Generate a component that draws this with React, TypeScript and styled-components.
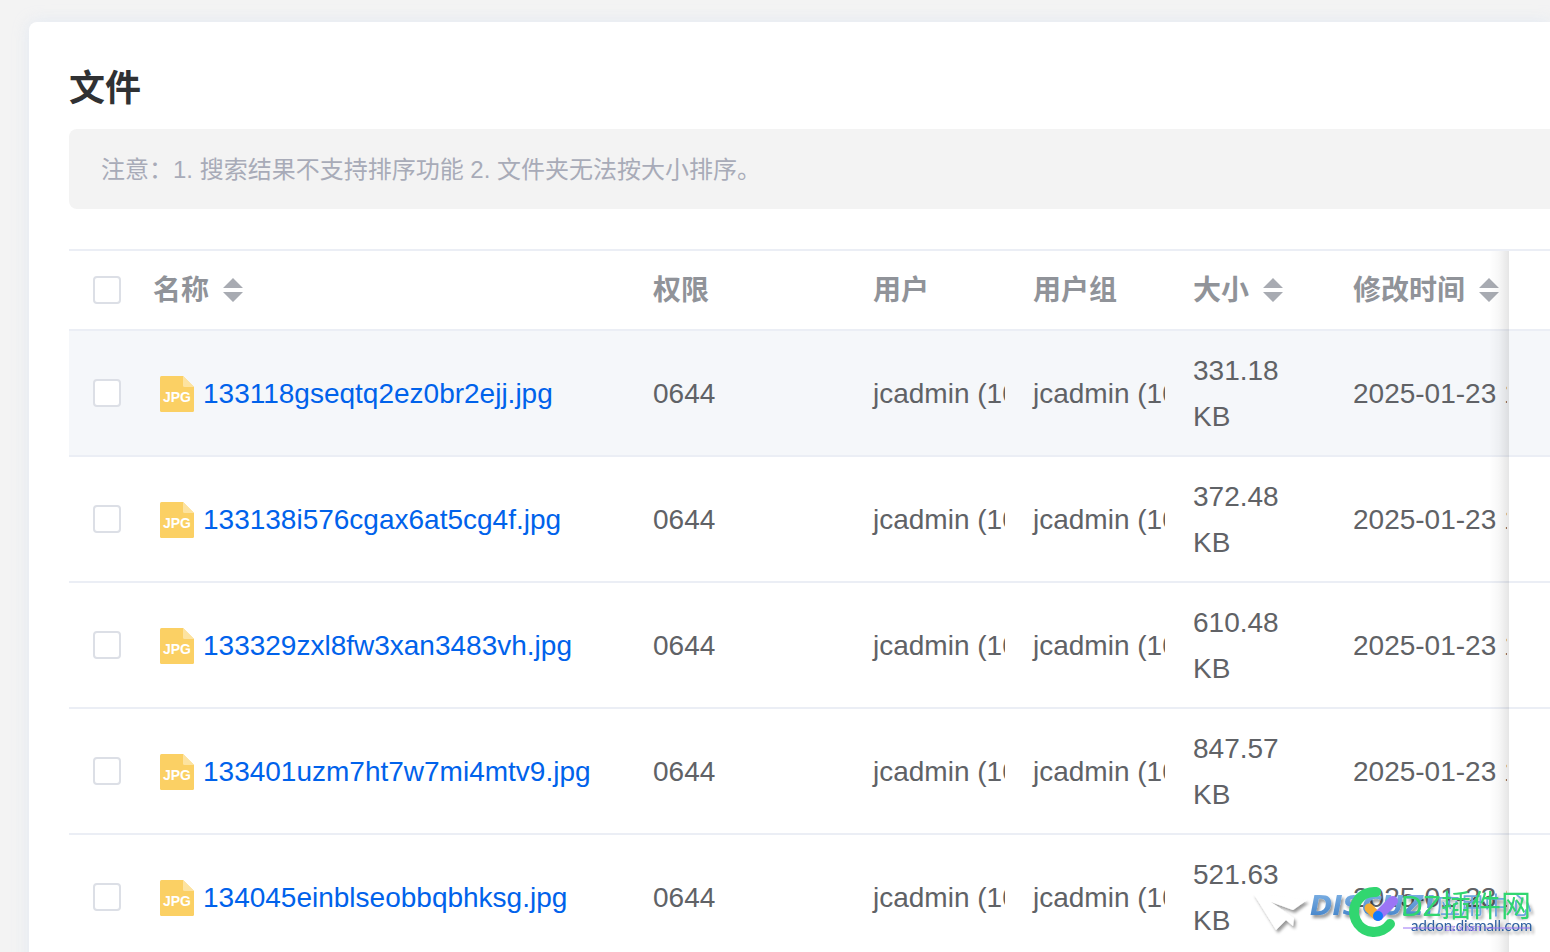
import React from 'react';
import styled, { createGlobalStyle } from 'styled-components';

const Global = createGlobalStyle`
  *, *::before, *::after { box-sizing: border-box; }
  body {
    margin: 0;
    background: #f3f3f3;
    font-family: "Liberation Sans", "Noto Sans CJK SC", sans-serif;
    font-size: 28px;
    color: #606266;
  }
`;

const Page = styled.div`
  display: flex;
  height: 100vh;
  padding: 22px 0 0 29px;
  overflow: hidden;
`;

const Card = styled.main`
  flex: 1;
  min-width: 0;
  height: max-content;
  padding: 40px 0 40px 40px;
  background: #fff;
  border-radius: 8px 0 0 8px;
  box-shadow: 0 0 16px rgba(220, 230, 244, 0.7);
`;

const Title = styled.h1`
  margin: 0 0 13px;
  font-size: 36px;
  line-height: 54px;
  font-weight: 700;
  color: #303133;
`;

const Notice = styled.p`
  margin: 0 0 40px;
  padding: 21px 32px 19px;
  background: #f3f3f3;
  border-radius: 8px 0 0 8px;
  font-size: 24px;
  line-height: 40px;
  color: #a8abb8;
`;

const Table = styled.table`
  width: 100%;
  table-layout: fixed;
  border-collapse: separate;
  border-spacing: 0;
  border-top: 2px solid #ebeef5;
`;

const Col = styled.col<{ $w?: number }>`
  width: ${({ $w }) => ($w ? `${$w}px` : 'auto')};
`;

const HeadCell = styled.th`
  height: 80px;
  padding: 0 0 0 20px;
  border-bottom: 2px solid #ebeef5;
  text-align: left;
  white-space: nowrap;
  font-weight: 700;
  line-height: 46px;
  color: #909399;
`;

const HeadLabel = styled.span`
  display: block;
  padding-top: 2px;
`;

const Row = styled.tr<{ $active?: boolean }>`
  background: ${({ $active }) => ($active ? '#f5f7fa' : '#fff')};
`;

const Cell = styled.td<{ $clip?: boolean; $end?: number }>`
  padding: 17px ${({ $end = 20 }) => $end}px 15px 20px;
  border-bottom: 2px solid #ebeef5;
  line-height: 46px;
  vertical-align: middle;
  white-space: ${({ $clip }) => ($clip ? 'nowrap' : 'normal')};
`;

const TickCell = styled(Cell)`
  padding: 16px 0 16px 20px;
`;

const Clip = styled.div`
  margin-left: -4px;
  padding-left: 4px;
  overflow: hidden;
`;

const pinned = `
  position: relative;
  padding: 0;
  &::before {
    content: '';
    position: absolute;
    top: 0;
    bottom: -2px;
    left: -20px;
    width: 20px;
    background: linear-gradient(to right, rgba(0, 0, 0, 0), rgba(0, 0, 0, 0.03) 50%, rgba(0, 0, 0, 0.1));
  }
`;
const PinnedHead = styled(HeadCell)`${pinned}`;
const PinnedCell = styled(Cell)`${pinned}`;

const Tick = styled.input`
  appearance: none;
  display: block;
  width: 28px;
  height: 28px;
  margin: 0 0 0 4px;
  background: #fff;
  border: 2px solid #dcdfe6;
  border-radius: 4px;
`;

const SortButton = styled.button`
  display: flex;
  align-items: center;
  gap: 14px;
  padding: 0;
  border: 0;
  background: none;
  font: inherit;
  color: inherit;
`;

const FileLink = styled.a`
  display: flex;
  align-items: center;
  gap: 9px;
  padding-left: 7px;
  color: #0062eb;
  text-decoration: none;
`;

const Watermark = styled.aside`
  position: fixed;
  right: 14px;
  bottom: 8px;
  pointer-events: none;
  svg { display: block; }
`;

const SortIcon = () => (
  <svg width="20" height="24" viewBox="0 0 20 24" fill="#a8abb2" aria-hidden="true">
    <path d="M10 0 20 10H0Z M0 14H20L10 24Z" />
  </svg>
);

const JpgIcon = () => (
  <svg width="34" height="36" viewBox="0 0 34 36" aria-hidden="true">
    <path d="M1.5 0H23L34 11V34.5Q34 36 32.5 36H1.5Q0 36 0 34.5V1.5Q0 0 1.5 0Z" fill="#fbd064" />
    <path d="M23 0 34 11H24.5Q23 11 23 9.5Z" fill="#fde3a0" />
    <text x="17" y="26" fontFamily="Liberation Sans" fontWeight="700" fontSize="14" textAnchor="middle" fill="#fff">JPG</text>
  </svg>
);

const files = [
  { name: '133118gseqtq2ez0br2ejj.jpg', size: '331.18 KB' },
  { name: '133138i576cgax6at5cg4f.jpg', size: '372.48 KB' },
  { name: '133329zxl8fw3xan3483vh.jpg', size: '610.48 KB' },
  { name: '133401uzm7ht7w7mi4mtv9.jpg', size: '847.57 KB' },
  { name: '134045einblseobbqbhksg.jpg', size: '521.63 KB' },
];

const Sortable = ({ children }: { children: React.ReactNode }) => (
  <SortButton type="button">
    <HeadLabel>{children}</HeadLabel>
    <SortIcon />
  </SortButton>
);

const Logo = () => (
  <svg width="290" height="60" viewBox="0 0 290 60" aria-hidden="true">
    <defs>
      <filter id="shade" x="-10%" y="-20%" width="125%" height="160%">
        <feDropShadow dx="2" dy="3" stdDeviation="1.5" floodColor="#000" floodOpacity="0.4" />
      </filter>
      <linearGradient id="sky" x1="0" y1="0" x2="0" y2="1">
        <stop offset="0" stopColor="#82b4e6" />
        <stop offset="1" stopColor="#3e7fc6" />
      </linearGradient>
    </defs>
    <g filter="url(#shade)">
      <path d="M7 9 61 16 47 26 25 18 48 34 47 42 40 36 30 46Z" fill="#fff" />
      <text x="64" y="31" fontFamily="DejaVu Sans, sans-serif" fontWeight="700" fontStyle="italic" fontSize="27" fill="url(#sky)">DISCUZ!</text>
      <text x="190" y="30" fontFamily="Noto Sans CJK SC" fontSize="24" fill="#6fa5de">应用中心</text>
      <text x="165" y="47" fontFamily="Lato, sans-serif" fontSize="15" fill="#2d5f9e">addon.dismall.com</text>
    </g>
    <path d="M130 8A20 20 0 1 0 144 40" fill="none" stroke="#31d670" strokeWidth="10" strokeLinecap="round" />
    <path d="M123 24 131 32" stroke="#f5ad34" strokeWidth="9" strokeLinecap="round" />
    <path d="M132 32 147 17" stroke="#9b75f5" strokeWidth="10" strokeLinecap="round" />
    <circle cx="132" cy="32" r="5" fill="#117bfb" />
    <text x="155" y="32" fontFamily="Liberation Sans, Noto Sans CJK SC" fontSize="30" fill="#31d670">DZ插件网</text>
    <path d="M157 44H197M238 44H284" stroke="#9b75f5" strokeWidth="1" />
    <text x="199" y="47" fontFamily="Liberation Sans" fontSize="8" fill="#9b75f5">DZ-X.NET</text>
  </svg>
);

export default function App() {
  return (
    <>
      <Global />
      <Page>
        <Card>
          <Title>文件</Title>
          <Notice>注意：1. 搜索结果不支持排序功能 2. 文件夹无法按大小排序。</Notice>
          <Table>
            <colgroup>
              <Col $w={64} />
              <Col $w={500} />
              <Col $w={220} />
              <Col $w={160} />
              <Col $w={160} />
              <Col $w={160} />
              <Col $w={176} />
              <Col />
            </colgroup>
            <thead>
              <tr>
                <HeadCell><Tick type="checkbox" aria-label="全选" /></HeadCell>
                <HeadCell><Sortable>名称</Sortable></HeadCell>
                <HeadCell><HeadLabel>权限</HeadLabel></HeadCell>
                <HeadCell><HeadLabel>用户</HeadLabel></HeadCell>
                <HeadCell><HeadLabel>用户组</HeadLabel></HeadCell>
                <HeadCell><Sortable>大小</Sortable></HeadCell>
                <HeadCell><Sortable>修改时间</Sortable></HeadCell>
                <PinnedHead />
              </tr>
            </thead>
            <tbody>
              {files.map((file, i) => (
                <Row key={file.name} $active={i === 0}>
                  <TickCell><Tick type="checkbox" aria-label={file.name} /></TickCell>
                  <Cell><FileLink href="#"><JpgIcon />{file.name}</FileLink></Cell>
                  <Cell>0644</Cell>
                  <Cell $clip $end={8}><Clip>jcadmin (1000)</Clip></Cell>
                  <Cell $clip $end={8}><Clip>jcadmin (1000)</Clip></Cell>
                  <Cell>{file.size}</Cell>
                  <Cell $clip $end={2}><Clip>2025-01-23 13:31:18</Clip></Cell>
                  <PinnedCell />
                </Row>
              ))}
            </tbody>
          </Table>
        </Card>
      </Page>
      <Watermark><Logo /></Watermark>
    </>
  );
}
